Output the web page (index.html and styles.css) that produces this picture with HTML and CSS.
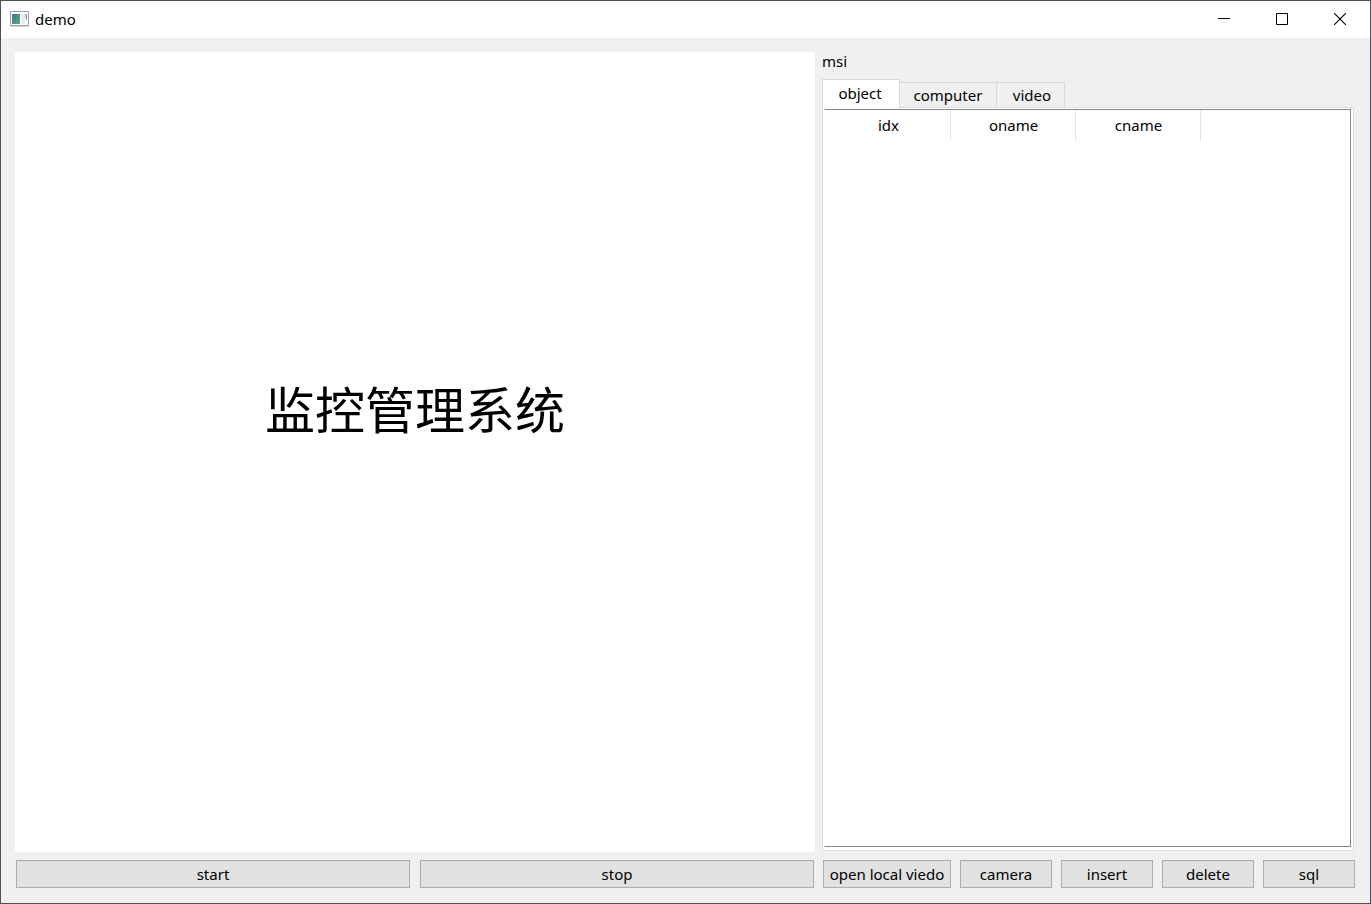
FILE: index.html
```html
<!DOCTYPE html>
<html lang="zh-CN">
<head>
<meta charset="utf-8">
<title>demo</title>
<link rel="stylesheet" href="styles.css">
</head>
<body>
<div class="window">
  <header class="titlebar">
    <svg class="app-icon" width="19" height="16" viewBox="0 0 19 16" aria-hidden="true">
      <defs><linearGradient id="pane" x1="0" y1="0" x2="1" y2="1"><stop offset="0" stop-color="#3f739c"/><stop offset="1" stop-color="#55ad79"/></linearGradient></defs>
      <path d="M0.500 0.500h18v14h-18z" fill="#fff" stroke="#9a9fa3"/>
      <path d="M2 3h8v10H2z" fill="url(#pane)"/>
      <path d="M11 3h4v10h-4z" fill="#e9ecee"/>
      <path d="M16 3h1v6h-1z" fill="#67aa91"/>
      <path d="M15 3h1v4h-1z" fill="#b7d2dd"/>
      <path d="M0 15h19v1H0z" fill="#d5d7d8"/>
    </svg>
    <h1 class="title">demo</h1>
    <div class="window-controls">
      <button class="control" aria-label="Minimize"><svg width="12" height="12" viewBox="0 0 12 12"><path d="M0 5h12v1H0z"/></svg></button>
      <button class="control" aria-label="Maximize"><svg width="12" height="12" viewBox="0 0 12 12"><path d="M0.500 0.500h11v11h-11z" fill="none" stroke="#000"/></svg></button>
      <button class="control" aria-label="Close"><svg width="12" height="12" viewBox="0 0 12 12"><path d="M0 0l12 12M12 0L0 12" fill="none" stroke="#000" stroke-width="1.100"/></svg></button>
    </div>
  </header>
  <main class="workspace">
    <section class="monitor">
      <div class="screen"><p class="banner">监控管理系统</p></div>
      <div class="actions playback">
        <button class="push">start</button>
        <button class="push">stop</button>
      </div>
    </section>
    <section class="data">
      <p class="message">msi</p>
      <div class="tabs" role="tablist">
        <button class="tab tab-object" role="tab" aria-selected="true">object</button>
        <button class="tab tab-computer" role="tab" aria-selected="false">computer</button>
        <button class="tab tab-video" role="tab" aria-selected="false">video</button>
      </div>
      <div class="tab-page" role="tabpanel">
        <div class="table-view">
          <table class="grid">
            <thead><tr><th scope="col">idx</th><th scope="col">oname</th><th scope="col">cname</th></tr></thead>
          </table>
        </div>
      </div>
      <div class="actions commands">
        <button class="push push-wide">open local viedo</button>
        <button class="push">camera</button>
        <button class="push">insert</button>
        <button class="push">delete</button>
        <button class="push">sql</button>
      </div>
    </section>
  </main>
</div>
</body>
</html>
```
FILE: styles.css
```css
* {
  box-sizing: border-box;
}

body {
  margin: 0;
  color: #000;
  font: 15px/20px "Noto Sans", "Noto Sans CJK SC", sans-serif;
}

button {
  margin: 0;
  padding: 0;
  color: inherit;
  font: inherit;
}

p {
  margin: 0;
}

.window {
  display: flex;
  flex-direction: column;
  min-height: 100vh;
  border: 1px solid #514e5e;
  background: #f0f0f0;
}

.titlebar {
  display: flex;
  align-items: center;
  height: 37px;
  padding: 0 1px 1px 9px;
  background: #fff;
}

.title {
  margin: 0 0 0 6px;
  font-size: 15px;
  font-weight: 400;
}

.window-controls {
  display: flex;
  align-self: stretch;
  margin-left: auto;
}

.control {
  display: flex;
  align-items: center;
  justify-content: center;
  width: 58px;
  border: 0;
  background: transparent;
}

.workspace {
  flex: 1;
  display: grid;
  grid-template-columns: minmax(0, 800fr) minmax(532px, 533fr);
  gap: 7px;
  padding: 14px 15px 15px 14px;
}

.monitor,
.data {
  display: flex;
  flex-direction: column;
}

.screen {
  flex: 1;
  display: flex;
  align-items: center;
  justify-content: center;
  padding-bottom: 90px;
  background: #fff;
}

.banner {
  font-family: "Noto Sans CJK SC", sans-serif;
  font-size: 50px;
  line-height: 88px;
}

.actions {
  display: flex;
  height: 28px;
}

.playback {
  gap: 10px;
  margin: 8px 1px 0;
}

.commands {
  gap: 9px;
  margin: 9px 0 0 1px;
}

.push {
  flex: 1 1 92px;
  border: 1px solid #adadad;
  background: #e1e1e1;
  white-space: nowrap;
}

.push-wide {
  flex: 1 1 128px;
}

.message {
  height: 27px;
  line-height: 18px;
}

.tabs {
  display: flex;
  align-items: flex-end;
  height: 28px;
}

.tab {
  height: 25px;
  border: 1px solid #d9d9d9;
  border-width: 1px 1px 0 0;
  background: #f0f0f0;
}

.tab-object {
  z-index: 1;
  width: 78px;
  height: 29px;
  margin-bottom: -1px;
  padding: 0 2px 2px 0;
  border-left-width: 1px;
  background: #fff;
}

.tab-computer {
  width: 97px;
}

.tab-video {
  width: 68px;
  padding-left: 3px;
}

.tab-page {
  flex: 1;
  display: flex;
  margin-right: 1px;
  padding: 1px 2px 3px 1px;
  border: 1px solid #dcdcdc;
  background: #fff;
}

.table-view {
  flex: 1;
  padding-left: 1px;
  border: 1px solid #828790;
  border-left-color: #fff;
}

.grid {
  table-layout: fixed;
  width: 375px;
  border-collapse: separate;
  border-spacing: 0;
}

.grid th {
  height: 31px;
  padding: 0 0 2px 1px;
  border-right: 1px solid #e5e5e5;
  font-weight: 400;
}
```
